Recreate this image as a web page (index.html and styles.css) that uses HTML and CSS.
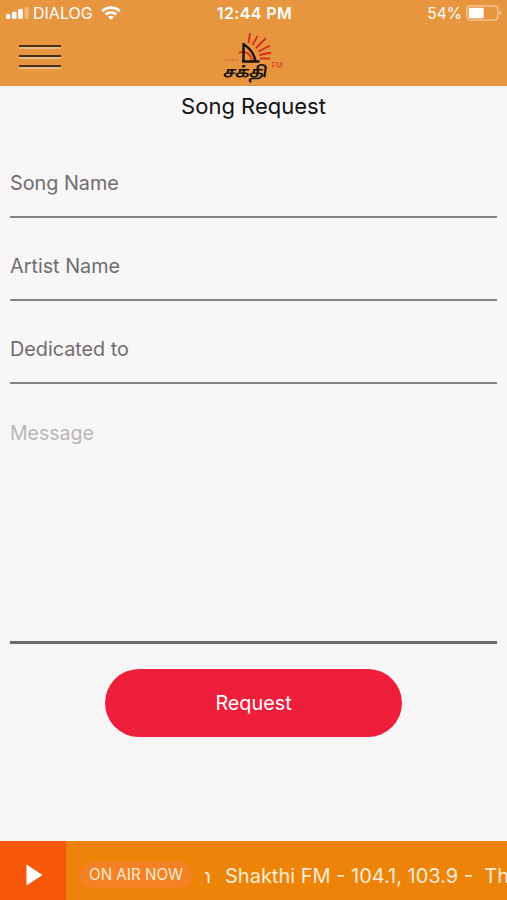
FILE: index.html
```html
<!DOCTYPE html>
<html lang="en">
<head>
    <meta charset="UTF-8">
    <meta name="viewport" content="width=device-width, initial-scale=1.0">
    <title>Song Request</title>
    <link rel="stylesheet" href="styles.css">
</head>
<body>

    <header class="header">
        <div class="status-bar">
            <div class="status-left">
                <svg class="signal" width="24" height="12" viewBox="0 0 24 12" fill="#fff">
                    <rect x="0" y="7" width="4.4" height="5" rx="1.2"/>
                    <rect x="6" y="4.8" width="4.6" height="7.2" rx="1.2"/>
                    <rect x="12.2" y="2" width="4.6" height="10" rx="1.2"/>
                    <rect x="18.5" y="0" width="4.4" height="12" rx="1.2" opacity="0.3"/>
                </svg>
                <span class="carrier">DIALOG</span>
                <svg class="wifi" width="20" height="14" viewBox="0 0 20 14" fill="none" stroke="#fff" stroke-width="2.8">
                    <path d="M1.2 5.2C6.2 .3 13.8 .3 18.8 5.2"/>
                    <path d="M4.6 8.6C7.7 5.6 12.3 5.6 15.4 8.6"/>
                    <path d="M10 13.8L7 10.9C8.7 9.3 11.3 9.3 13 10.9Z" fill="#fff" stroke="none"/>
                </svg>
            </div>
            <span class="clock">12:44 PM</span>
            <div class="status-right">
                <span class="percent">54%</span>
                <svg class="battery" width="37" height="16" viewBox="0 0 37 16">
                    <rect x="0.8" y="0.8" width="31" height="14.4" rx="3.5" fill="none" stroke="#fff" stroke-opacity="0.5" stroke-width="1.2"/>
                    <rect x="2.7" y="2.7" width="15" height="10.6" rx="1.5" fill="#fff"/>
                    <path d="M33.5 5.5C36 6.4 36 9.6 33.5 10.5Z" fill="#fff" fill-opacity="0.5"/>
                </svg>
            </div>
        </div>
        <div class="nav-bar">
            <button class="menu-button" type="button" aria-label="Menu">
                <span></span>
                <span></span>
                <span></span>
            </button>
            <div class="logo">
                <svg class="logo-sun" width="64" height="34" viewBox="0 0 64 34" fill="none">
                    <g stroke="#d62a1e" stroke-width="1.8">
                        <path d="M27.5 13L29 3"/>
                        <path d="M31.5 15L36.5 6"/>
                        <path d="M35 18L45 8"/>
                        <path d="M37.5 21.5L49 15.5"/>
                        <path d="M38.5 25L50 22.5"/>
                        <path d="M39 28.5L49 28.5"/>
                        <path d="M18 23C24 20 31 24 31 33"/>
                    </g>
                    <path d="M22.5 13V31M21 31.5H38.5M22 14C29 18 33 23 34.5 31" stroke="#17120c" stroke-width="2.4"/>
                </svg>
                <span class="logo-tag">அலை</span>
                <span class="logo-name">சக்தி</span>
                <span class="logo-fm">FM</span>
            </div>
        </div>
    </header>

    <main class="request-form">
        <h2>Song Request</h2>
        <form id="request-form">
            <input type="text" name="song" placeholder="Song Name" aria-label="Song Name">
            <input type="text" name="artist" placeholder="Artist Name" aria-label="Artist Name">
            <input type="text" name="dedicated" placeholder="Dedicated to" aria-label="Dedicated to">
            <textarea name="message" placeholder="Message" aria-label="Message"></textarea>
            <button class="request-button" type="submit">Request</button>
        </form>
    </main>

    <footer class="player">
        <button class="play-button" type="button" aria-label="Play">
            <svg width="17" height="22" viewBox="0 0 17 22">
                <path d="M0.5 0.5L16.5 11L0.5 21.5Z" fill="#fff"/>
            </svg>
        </button>
        <span class="on-air">ON AIR NOW</span>
        <div class="ticker">
            <span class="ticker-end">n</span>
            <span class="ticker-text">Shakthi FM - 104.1, 103.9 -&nbsp; Th</span>
        </div>
    </footer>

</body>
</html>
```

FILE: styles.css
```css
* {
    box-sizing: border-box;
}

body {
    font-family: Inter, "Noto Sans", sans-serif;
    background-color: #f8f6f7;
    margin: 0;
    height: 100vh;
    display: flex;
    flex-direction: column;
    overflow: hidden;
}

button {
    border: none;
    padding: 0;
    font-family: inherit;
    cursor: pointer;
}

.header {
    height: 86px;
    background-color: #e8953f;
    color: #fff;
}

.status-bar {
    height: 26px;
    display: grid;
    grid-template-columns: 1fr auto 1fr;
    align-items: center;
    padding: 0 4px 0 6px;
    font-size: 16px;
}

.status-left,
.status-right {
    display: flex;
    align-items: center;
}

.status-right {
    justify-content: flex-end;
    gap: 4px;
}

.percent {
    font-size: 15.5px;
}

.carrier {
    margin: 0 8px 0 3px;
    font-size: 16px;
}

.clock {
    font-size: 16px;
    font-weight: 600;
    letter-spacing: 0.4px;
}

.nav-bar {
    height: 60px;
    display: grid;
    grid-template-columns: 1fr 64px 1fr;
    padding: 0 2px 0 0;
}

.menu-button {
    width: 42px;
    height: 24px;
    margin: 19px 0 0 19px;
    background: none;
    display: flex;
    flex-direction: column;
    justify-content: space-between;
}

.menu-button span {
    width: 42px;
    height: 4px;
    border-top: 2px solid #4a3019;
    border-bottom: 2px solid #e6b98a;
}

.logo {
    position: relative;
    height: 58px;
}

.logo-sun {
    display: block;
    margin-top: 4px;
}

/* lettering sits over the drawing */
.logo-name {
    position: absolute;
    left: 3px;
    top: 36px;
    color: #17120c;
    font-size: 16px;
    font-weight: 700;
    line-height: 18px;
    transform: scaleX(1.36) skewX(-6deg);
    transform-origin: left center;
}

.logo-tag {
    position: absolute;
    left: 3px;
    top: 31px;
    color: #c6562b;
    font-size: 5px;
    line-height: 5px;
}

.logo-fm {
    position: absolute;
    left: 51px;
    top: 35px;
    color: #d9412a;
    font-size: 7.5px;
    line-height: 10px;
}

.request-form {
    flex: 1;
    padding: 0 10px;
}

.request-form h2 {
    margin: 5px 0 0;
    text-align: center;
    color: #111;
    font-size: 22px;
    font-weight: 400;
    line-height: 30px;
}

#request-form {
    display: flex;
    flex-direction: column;
    padding-top: 29.4px;
}

input[type="text"],
textarea {
    width: 100%;
    border: none;
    border-radius: 0;
    background: none;
    font-family: inherit;
    font-size: 19.8px;
    color: #333;
    outline: none;
}

input[type="text"] {
    height: 67.3px;
    margin-bottom: 16px;
    padding: 0 0 1px;
    border-bottom: 2px solid #858385;
}

input::placeholder {
    color: #6f6d6f;
    opacity: 1;
}

textarea {
    height: 243.6px;
    padding: 21px 0 0;
    border-bottom: 3px solid #6b696b;
    font-size: 19.5px;
    resize: none;
}

textarea::placeholder {
    color: #b9b7b9;
    opacity: 1;
}

.request-button {
    width: 297px;
    height: 68px;
    margin: 25px auto 0;
    padding-top: 1px;
    border-radius: 34px;
    background-color: #ef1e3b;
    color: #fff;
    font-size: 19.8px;
}

.player {
    height: 59px;
    background-color: #ed8309;
    display: flex;
    align-items: center;
    color: #fdeed8;
}

.play-button {
    width: 66px;
    height: 59px;
    flex-shrink: 0;
    background-color: #f65708;
    display: flex;
    align-items: center;
    padding: 9px 0 0 26px;
}

.on-air {
    flex-shrink: 0;
    width: 112px;
    margin: 9px 0 0 14px;
    border-radius: 14px;
    background-color: #f58124;
    text-align: center;
    font-size: 15.2px;
    line-height: 26px;
}

.ticker {
    flex: 1;
    display: flex;
    margin: 10px 0 0 13px;
    overflow: hidden;
    white-space: nowrap;
    font-size: 20px;
    line-height: 26px;
}

.ticker-end {
    width: 6px;
    flex-shrink: 0;
    margin-right: 14px;
    display: flex;
    justify-content: flex-end;
    overflow: hidden;
}
```
